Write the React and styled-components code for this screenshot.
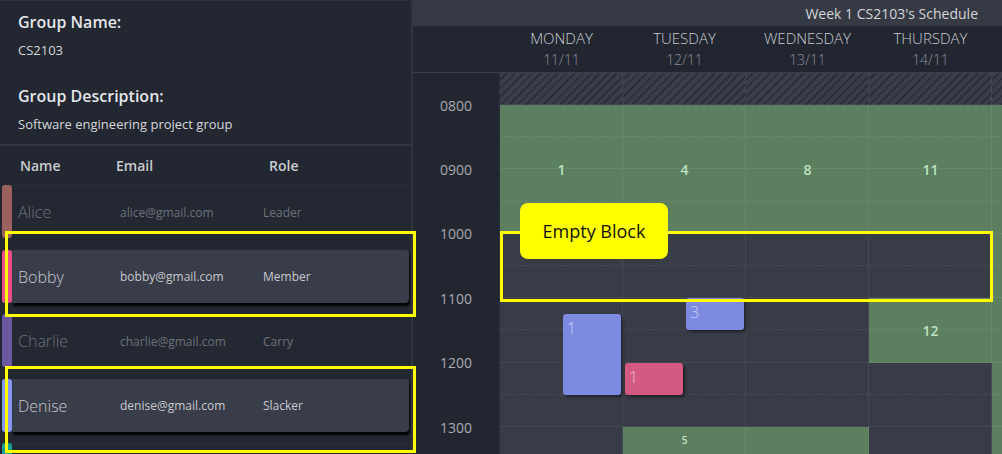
import React from 'react';
import styled, { createGlobalStyle } from 'styled-components';

const GlobalStyle = createGlobalStyle`
  html, body {
    margin: 0;
    padding: 0;
    background: #222731;
  }
  body {
    font-family: 'Open Sans', 'Noto Sans', sans-serif;
  }
`;

const COLUMNS = '87px repeat(5, 123px)';
const HALF_HOUR = 32.2;

const members = [
  { name: 'Alice', email: 'alice@gmail.com', role: 'Leader', color: '#9c605d' },
  { name: 'Bobby', email: 'bobby@gmail.com', role: 'Member', color: '#ea4f8b', active: true },
  { name: 'Charlie', email: 'charlie@gmail.com', role: 'Carry', color: '#6c58a0' },
  { name: 'Denise', email: 'denise@gmail.com', role: 'Slacker', color: '#8898f7', active: true },
];

// the fifth (friday) column is scrolled past the right edge, only its cells peek in
const days = [
  ['MONDAY', '11/11'],
  ['TUESDAY', '12/11'],
  ['WEDNESDAY', '13/11'],
  ['THURSDAY', '14/11'],
];

const times = ['0800', '0900', '1000', '1100', '1200', '1300'];

// hour -> grid row line (row 1 is the hatched half hour before 0800)
const row = h => 2 + (h - 8) * 2;

const freeBlocks = [
  { col: 2, from: 8, to: 10, label: '1' },
  { col: 3, from: 8, to: 10, label: '4' },
  { col: 4, from: 8, to: 10, label: '8' },
  { col: 5, from: 8, to: 10, label: '11' },
  { col: 5, from: 11, to: 12, label: '12' },
  { col: 3, from: 13, to: 14, label: '5', small: true },
  { col: 4, from: 13, to: 14 },
  { col: 6, from: 8, to: 14 },
];

const events = [
  { col: 2, from: 11.25, to: 12.5, side: 'end', color: '#7d8ae2', label: '1' },
  { col: 3, from: 12, to: 12.5, side: 'start', color: '#d45a84', label: '1' },
  { col: 3, from: 11, to: 11.5, side: 'end', color: '#7d8ae2', label: '3' },
];

const Page = styled.div`
  position: relative;
  display: flex;
  width: 1002px;
  height: 454px;
  overflow: hidden;
  background: #222731;
`;

const LeftPanel = styled.aside`
  width: 411px;
  flex-shrink: 0;
  border-top: 1px solid #2c313b;
  border-right: 2px solid #30353f;
  background: #222731;
  overflow: hidden;
`;

const Info = styled.div`
  display: flex;
  flex-direction: column;
  gap: 24px;
  padding: 9px 18px 10px;
  border-bottom: 2px solid #30353f;
`;

const Field = styled.div`
  display: flex;
  flex-direction: column;
  gap: 6px;
`;

const FieldLabel = styled.div`
  font-size: 16px;
  font-weight: 600;
  line-height: 24px;
  color: #e4e6e9;
`;

const FieldValue = styled.div`
  font-size: 13px;
  line-height: 20px;
  color: #d5d7da;
`;

const TableHeader = styled.div`
  display: grid;
  grid-template-columns: 96px 153px 1fr;
  align-items: center;
  height: 38px;
  padding-left: 20px;
  font-size: 14px;
  font-weight: 600;
  color: #c9ccd0;
`;

const MemberList = styled.div`
  display: flex;
  flex-direction: column;
  gap: 11.5px;
  padding: 1px 2px 0 2px;
`;

const MemberRow = styled.div`
  display: flex;
  height: 53px;
  flex-shrink: 0;
`;

const ColorBar = styled.div`
  width: 10px;
  flex-shrink: 0;
  border-radius: 3px;
  background: ${p => p.$color};
`;

const MemberCard = styled.div`
  flex: 1;
  display: grid;
  grid-template-columns: 102px 143px 1fr;
  align-items: center;
  box-sizing: border-box;
  padding-left: 6px;
  border-radius: 0 4px 4px 0;
  background: ${p => (p.$active ? '#383d49' : '#232832')};
  border-top: 1px solid ${p => (p.$active ? '#383d49' : '#2b303a')};
  box-shadow: ${p => (p.$active ? '1px 3px 2px rgba(0, 0, 0, 0.9)' : 'none')};
  color: ${p => (p.$active ? '#c6c9cd' : '#6d727a')};
`;

const MemberName = styled.span`
  font-size: 16px;
  font-weight: 300;
`;

const MemberDetail = styled.span`
  font-size: 12px;
`;

const RightPanel = styled.main`
  flex: 1;
  display: flex;
  flex-direction: column;
  min-width: 0;
  overflow: hidden;
`;

const TitleBar = styled.div`
  height: 26px;
  flex-shrink: 0;
  display: flex;
  align-items: center;
  justify-content: flex-end;
  padding-right: 24px;
  background: #363a45;
  font-size: 14px;
  color: #d3d5d8;
`;

const DayHeader = styled.div`
  display: grid;
  grid-template-columns: ${COLUMNS};
  height: 46px;
  flex-shrink: 0;
  background: #212631;
  border-bottom: 1px solid #3a3f4a;
`;

const DayCell = styled.div`
  grid-column: ${p => p.$col};
  display: flex;
  flex-direction: column;
  align-items: center;
  justify-content: center;
  gap: 2px;
  font-weight: 300;
  line-height: 20px;
`;

const DayName = styled.span`
  font-size: 15px;
  color: #c8cbd0;
`;

const DayDate = styled.span`
  font-size: 14px;
  color: #8d9199;
`;

const ScheduleBody = styled.div`
  display: grid;
  grid-template-columns: ${COLUMNS};
  grid-template-rows: 32px repeat(12, ${HALF_HOUR}px);
  background: #383c47;
`;

const TimeColumn = styled.div`
  grid-column: 1;
  grid-row: 1 / -1;
  display: flex;
  flex-direction: column;
  background: #212631;
  border-right: 1px solid #2b303a;
`;

const TimeLabel = styled.div`
  height: ${HALF_HOUR * 2}px;
  flex-shrink: 0;
  display: flex;
  align-items: center;
  justify-content: flex-end;
  padding-right: 27px;
  font-size: 14px;
  color: #a8acb2;
`;

const Hatched = styled.div`
  grid-column: ${p => p.$col};
  grid-row: 1;
  background: repeating-linear-gradient(
    135deg,
    #3a3e49 0px,
    #3a3e49 4px,
    #2b2f39 4px,
    #2b2f39 6px
  );
`;

const FreeBlock = styled.div`
  grid-column: ${p => p.$col};
  grid-row: ${p => p.$from} / ${p => p.$to};
  display: flex;
  justify-content: center;
  align-items: ${p => (p.$small ? 'flex-start' : 'center')};
  padding-top: ${p => (p.$small ? '6px' : '0')};
  background: #5c7f60;
  font-size: ${p => (p.$small ? '10px' : '14px')};
  font-weight: 600;
  color: #bfe2bf;
`;

const Slot = styled.div`
  grid-column: ${p => p.$col};
  grid-row: ${p => p.$row};
  border-right: 1px solid rgba(255, 255, 255, 0.07);
  border-bottom: 1px ${p => (p.$hour ? 'solid' : 'dashed')} rgba(255, 255, 255, ${p => (p.$hour ? 0.07 : 0.08)});
`;

const EventBlock = styled.div`
  grid-column: ${p => p.$col};
  grid-row: ${p => p.$from} / ${p => p.$to};
  justify-self: ${p => p.$side};
  align-self: start;
  width: 58px;
  height: ${p => p.$height}px;
  margin-top: ${p => p.$offset}px;
  margin-left: ${p => (p.$side === 'start' ? '2px' : '0')};
  margin-right: ${p => (p.$side === 'end' ? '2px' : '0')};
  box-sizing: border-box;
  padding: 3px 4px;
  border-radius: 3px;
  background: ${p => p.$color};
  box-shadow: 2px 2px 3px rgba(0, 0, 0, 0.45);
  font-size: 16px;
  font-weight: 300;
  line-height: 22px;
  color: rgba(255, 255, 255, 0.6);
  z-index: 1;
`;

const Highlight = styled.div`
  position: absolute;
  left: ${p => p.$x}px;
  top: ${p => p.$y}px;
  width: ${p => p.$w}px;
  height: ${p => p.$h}px;
  box-sizing: border-box;
  border: 3px solid #ffff00;
  pointer-events: none;
  z-index: 5;
`;

const Callout = styled.div`
  position: absolute;
  left: 520px;
  top: 203px;
  width: 148px;
  height: 56px;
  display: flex;
  align-items: center;
  justify-content: center;
  border-radius: 8px;
  background: #ffff00;
  font-family: 'Open Sans', 'Liberation Sans', sans-serif;
  font-size: 18px;
  color: #111;
  z-index: 6;
`;

const GroupInfo = () => (
  <Info>
    <Field>
      <FieldLabel>Group Name:</FieldLabel>
      <FieldValue>CS2103</FieldValue>
    </Field>
    <Field>
      <FieldLabel>Group Description:</FieldLabel>
      <FieldValue>Software engineering project group</FieldValue>
    </Field>
  </Info>
);

const Members = () => (
  <>
    <TableHeader>
      <span>Name</span>
      <span>Email</span>
      <span>Role</span>
    </TableHeader>
    <MemberList>
      {members.map(m => (
        <MemberRow key={m.name}>
          <ColorBar $color={m.color} />
          <MemberCard $active={m.active}>
            <MemberName>{m.name}</MemberName>
            <MemberDetail>{m.email}</MemberDetail>
            <MemberDetail>{m.role}</MemberDetail>
          </MemberCard>
        </MemberRow>
      ))}
      {/* next member, scrolled below the fold */}
      <MemberRow>
        <ColorBar $color="#16a096" />
        <MemberCard />
      </MemberRow>
    </MemberList>
  </>
);

const Schedule = () => {
  const slots = [];
  for (let c = 2; c <= 6; c++) {
    for (let r = 1; r <= 13; r++) {
      slots.push(<Slot key={`${c}-${r}`} $col={c} $row={r} $hour={r % 2 === 1} />);
    }
  }

  return (
    <RightPanel>
      <TitleBar>Week 1 CS2103's Schedule</TitleBar>
      <DayHeader>
        {days.map(([name, date], i) => (
          <DayCell key={name} $col={i + 2}>
            <DayName>{name}</DayName>
            <DayDate>{date}</DayDate>
          </DayCell>
        ))}
      </DayHeader>
      <ScheduleBody>
        <TimeColumn>
          {times.map(t => (
            <TimeLabel key={t}>{t}</TimeLabel>
          ))}
        </TimeColumn>
        {[2, 3, 4, 5, 6].map(c => (
          <Hatched key={c} $col={c} />
        ))}
        {freeBlocks.map((b, i) => (
          <FreeBlock key={i} $col={b.col} $from={row(b.from)} $to={row(b.to)} $small={b.small}>
            {b.label}
          </FreeBlock>
        ))}
        {slots}
        {events.map((e, i) => {
          const slotStart = Math.floor(e.from * 2) / 2;
          return (
            <EventBlock
              key={i}
              $col={e.col}
              $from={row(slotStart)}
              $to={row(Math.ceil(e.to * 2) / 2)}
              $offset={Math.round((e.from - slotStart) * HALF_HOUR * 2)}
              $height={Math.round((e.to - e.from) * HALF_HOUR * 2)}
              $side={e.side}
              $color={e.color}
            >
              {e.label}
            </EventBlock>
          );
        })}
      </ScheduleBody>
    </RightPanel>
  );
};

export default function App() {
  return (
    <>
      <GlobalStyle />
      <Page>
        <LeftPanel>
          <GroupInfo />
          <Members />
        </LeftPanel>
        <Schedule />
        <Highlight $x={5} $y={231} $w={411} $h={86} />
        <Highlight $x={5} $y={366} $w={411} $h={87} />
        <Highlight $x={500} $y={231} $w={493} $h={71} />
        <Callout>Empty Block</Callout>
      </Page>
    </>
  );
}
